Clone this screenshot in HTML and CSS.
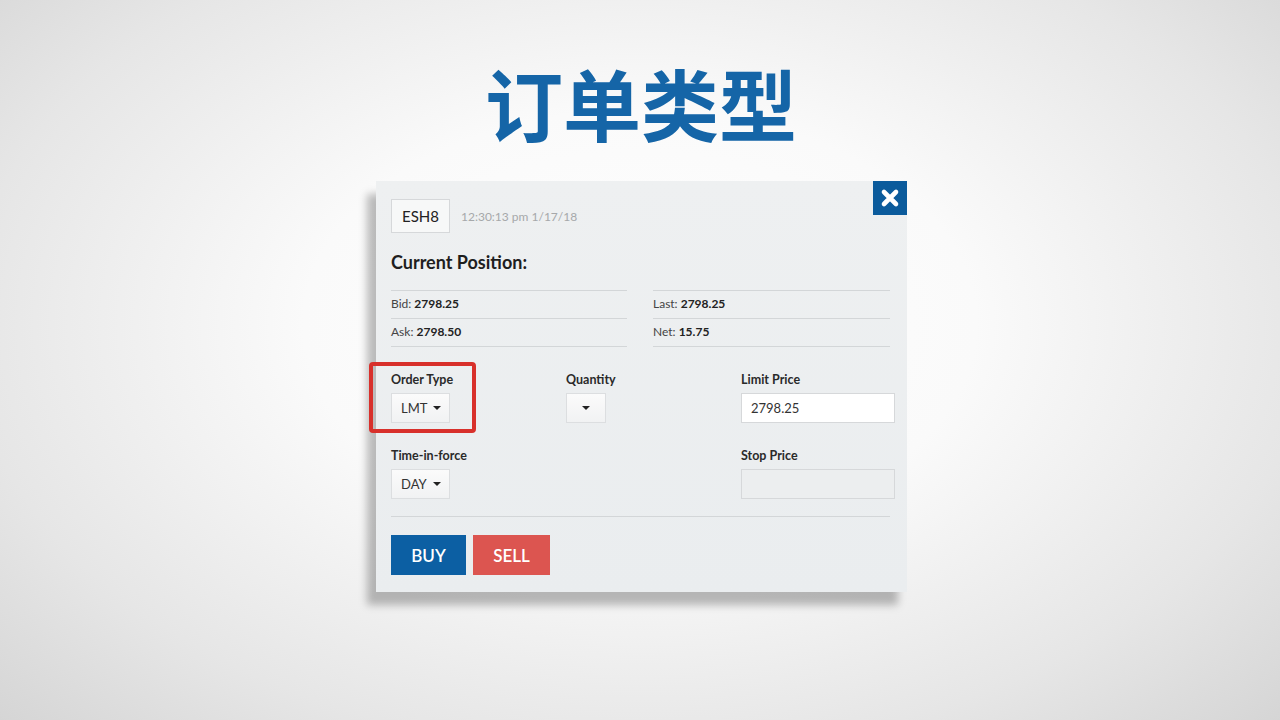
FILE: index.html
```html
<!DOCTYPE html>
<html lang="zh">
<head>
<meta charset="utf-8">
<link rel="stylesheet" href="styles.css">
</head>
<body>
<div class="page">
  <h1 class="title">订单类型</h1>
  <div class="panel">
    <button class="close" aria-label="close">
      <svg width="20" height="20" viewBox="0 0 20 20"><path d="M4 4 L16 16 M16 4 L4 16" stroke="#fff" stroke-width="4.6" stroke-linecap="round"/></svg>
    </button>
    <div class="head">
      <span class="symbol">ESH8</span>
      <span class="time">12:30:13 pm 1/17/18</span>
    </div>
    <h2 class="pos">Current Position:</h2>
    <div class="quotes">
      <div class="col">
        <div class="q">Bid: <b>2798.25</b></div>
        <div class="q">Ask: <b>2798.50</b></div>
      </div>
      <div class="col">
        <div class="q">Last: <b>2798.25</b></div>
        <div class="q">Net: <b>15.75</b></div>
      </div>
    </div>
    <div class="form">
      <div class="field highlight">
        <label>Order Type</label>
        <div class="dd">LMT <span class="caret"></span></div>
      </div>
      <div class="field">
        <label>Quantity</label>
        <div class="dd dd-empty"><span class="caret"></span></div>
      </div>
      <div class="field">
        <label>Limit Price</label>
        <div class="input">2798.25</div>
      </div>
      <div class="field">
        <label>Time-in-force</label>
        <div class="dd">DAY <span class="caret"></span></div>
      </div>
      <div class="field"></div>
      <div class="field">
        <label>Stop Price</label>
        <div class="input disabled"></div>
      </div>
    </div>
    <div class="actions">
      <button class="btn buy">BUY</button>
      <button class="btn sell">SELL</button>
    </div>
  </div>
</div>
</body>
</html>
```
FILE: styles.css
```css
html, body {
  margin: 0;
  height: 100%;
}
body {
  background: radial-gradient(ellipse 75% 85% at 50% 45%, #ffffff 0%, #fafafa 35%, #e6e6e6 70%, #d0d0d0 100%);
  font-family: Lato, "Open Sans", sans-serif;
  color: #333;
  overflow: hidden;
}
.page {
  width: 1280px;
  height: 720px;
  display: flex;
  flex-direction: column;
  align-items: center;
}
.title {
  margin: 52px 0 0;
  height: 129px;
  font-family: "Noto Sans CJK SC", sans-serif;
  font-weight: 700;
  font-size: 78px;
  line-height: 100px;
  color: #1565a7;
  transform: translateX(1px);
}
.panel {
  position: relative;
  margin-left: 3px;
  width: 531px;
  height: 411px;
  box-sizing: border-box;
  padding: 18px 12px 0 15px;
  background: linear-gradient(180deg, #eef0f1 0%, #eaedef 100%);
  box-shadow: -9px 13px 8px rgba(0, 0, 0, 0.26);
}
.close {
  position: absolute;
  top: 0;
  right: 0;
  width: 34px;
  height: 34px;
  border: 0;
  padding: 0;
  background: #0b5b9c;
  display: flex;
  align-items: center;
  justify-content: center;
}
.head {
  display: flex;
  align-items: center;
  gap: 11px;
}
.symbol {
  display: inline-block;
  box-sizing: border-box;
  width: 59px;
  height: 34px;
  line-height: 32px;
  text-align: center;
  border: 1px solid #d6d8da;
  background: #f7f8f8;
  font-size: 15px;
  color: #222;
}
.time {
  font-size: 12px;
  color: #a6a8aa;
}
.pos {
  margin: 17px 0 0;
  font-size: 18px;
  font-weight: 700;
  line-height: 24px;
  color: #1e1e1e;
}
.quotes {
  margin-top: 16px;
  display: grid;
  grid-template-columns: 236px 237px;
  gap: 26px;
}
.q {
  height: 27px;
  line-height: 26px;
  border-top: 1px solid #d3d6d8;
  font-size: 12px;
  color: #444;
}
.q:last-child {
  border-bottom: 1px solid #d3d6d8;
}
.q b {
  color: #222;
}
.form {
  margin-top: 25px;
  display: grid;
  grid-template-columns: 175px 175px 154px;
  row-gap: 25px;
}
.field {
  position: relative;
  display: flex;
  flex-direction: column;
  align-items: flex-start;
  gap: 5px;
}
.field label {
  font-size: 12.5px;
  font-weight: 700;
  line-height: 16px;
  color: #2a2a2a;
}
.highlight::before {
  content: "";
  position: absolute;
  left: -22px;
  top: -10px;
  width: 99px;
  height: 63px;
  border: 4px solid #d8302b;
  border-radius: 4px;
}
.dd {
  box-sizing: border-box;
  height: 30px;
  padding: 0 8px 0 9px;
  display: flex;
  align-items: center;
  gap: 6px;
  border: 1px solid #dcdee0;
  background: linear-gradient(#fbfbfb, #f1f2f3);
  font-size: 13px;
  color: #333;
}
.dd-empty {
  width: 40px;
  justify-content: center;
  padding: 0;
}
.caret {
  width: 0;
  height: 0;
  border-left: 4px solid transparent;
  border-right: 4px solid transparent;
  border-top: 4px solid #222;
}
.input {
  box-sizing: border-box;
  width: 154px;
  height: 30px;
  padding: 0 9px;
  line-height: 28px;
  border: 1px solid #d6d8da;
  background: #fff;
  font-size: 13px;
  color: #333;
}
.input.disabled {
  background: #eceeef;
}
.actions {
  margin-top: 17px;
  margin-right: 5px;
  padding-top: 18px;
  border-top: 1px solid #d3d6d8;
  display: flex;
  gap: 7px;
}
.btn {
  height: 40px;
  border: 0;
  font-family: Lato, sans-serif;
  font-size: 17px;
  font-weight: 600;
  color: #fff;
}
.buy {
  width: 75px;
  background: #0c5fa3;
}
.sell {
  width: 77px;
  background: #dc5550;
}
```
